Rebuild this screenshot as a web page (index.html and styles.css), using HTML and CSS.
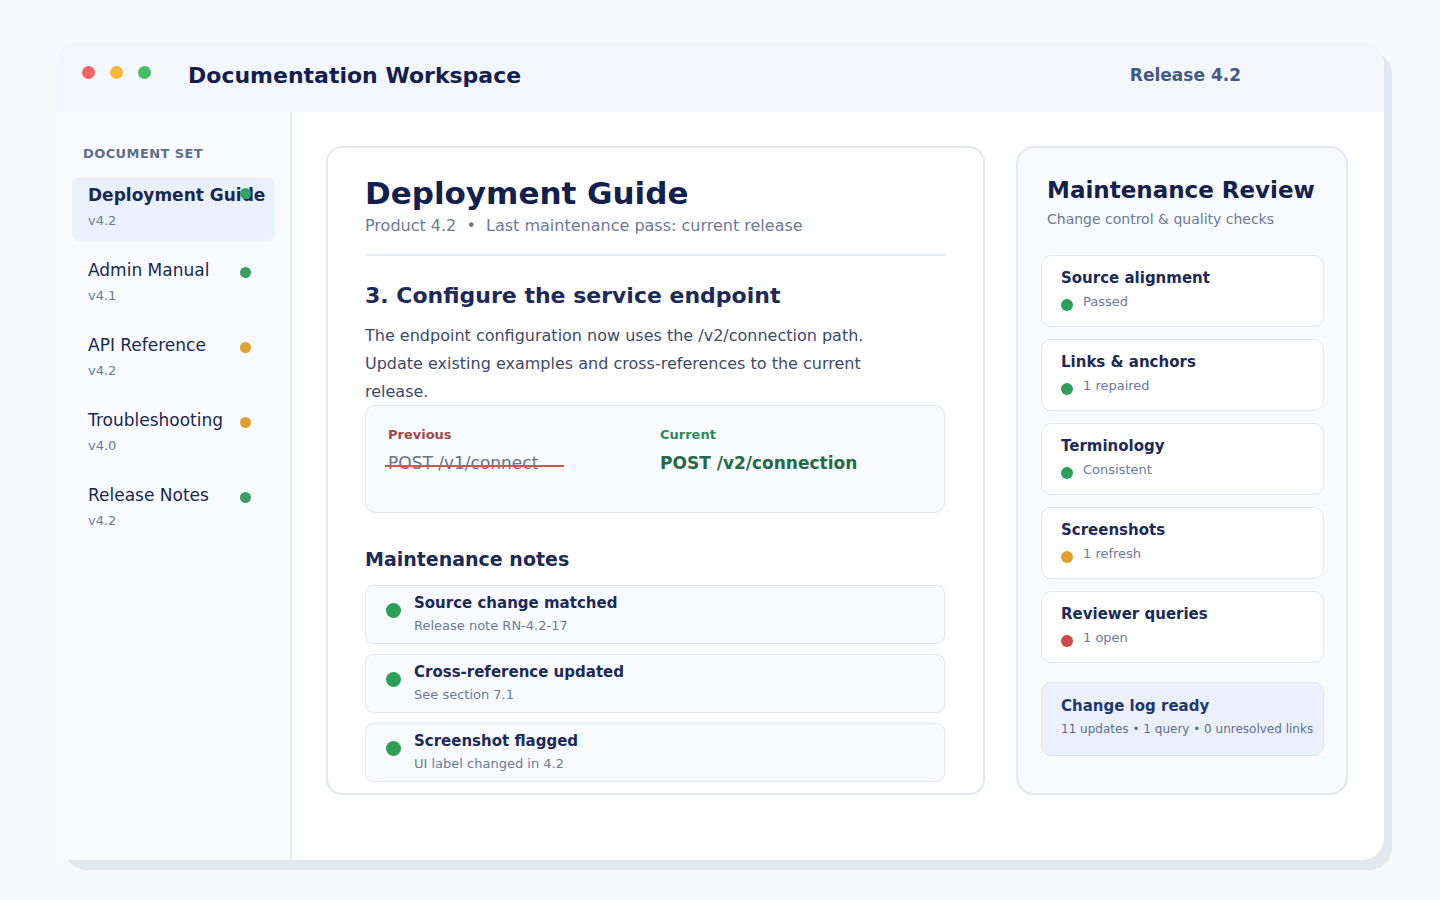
FILE: index.html
```html
<!DOCTYPE html>
<html>
<head>
<meta charset="utf-8">
<link rel="stylesheet" href="styles.css">
</head>
<body>
<div class="window">
  <header class="topbar">
    <div class="lights"><span class="light red"></span><span class="light yellow"></span><span class="light green"></span></div>
    <div class="app-title">Documentation Workspace</div>
    <div class="release">Release 4.2</div>
  </header>
  <div class="body">
    <aside class="sidebar">
      <div class="side-label">DOCUMENT SET</div>
      <div class="doc active"><div class="doc-row"><span class="doc-name">Deployment Guide</span><span class="dot d-green"></span></div><div class="doc-ver">v4.2</div></div>
      <div class="doc"><div class="doc-row"><span class="doc-name">Admin Manual</span><span class="dot d-green"></span></div><div class="doc-ver">v4.1</div></div>
      <div class="doc"><div class="doc-row"><span class="doc-name">API Reference</span><span class="dot d-amber"></span></div><div class="doc-ver">v4.2</div></div>
      <div class="doc"><div class="doc-row"><span class="doc-name">Troubleshooting</span><span class="dot d-amber"></span></div><div class="doc-ver">v4.0</div></div>
      <div class="doc"><div class="doc-row"><span class="doc-name">Release Notes</span><span class="dot d-green"></span></div><div class="doc-ver">v4.2</div></div>
    </aside>
    <main class="content">
      <section class="doc-card">
        <h1 class="doc-title">Deployment Guide</h1>
        <div class="doc-meta">Product 4.2 &nbsp;•&nbsp; Last maintenance pass: current release</div>
        <hr class="divider">
        <h2 class="section-title">3. Configure the service endpoint</h2>
        <p class="para">The endpoint configuration now uses the /v2/connection path. Update existing examples and cross-references to the current release.</p>
        <div class="compare">
          <div class="cmp-col">
            <div class="cmp-label prev">Previous</div>
            <div class="cmp-old">POST /v1/connect<span class="strike"></span></div>
          </div>
          <div class="cmp-col">
            <div class="cmp-label cur">Current</div>
            <div class="cmp-new">POST /v2/connection</div>
          </div>
        </div>
        <h3 class="notes-title">Maintenance notes</h3>
        <div class="note"><span class="note-dot"></span><div><div class="note-title">Source change matched</div><div class="note-sub">Release note RN-4.2-17</div></div></div>
        <div class="note"><span class="note-dot"></span><div><div class="note-title">Cross-reference updated</div><div class="note-sub">See section 7.1</div></div></div>
        <div class="note"><span class="note-dot"></span><div><div class="note-title">Screenshot flagged</div><div class="note-sub">UI label changed in 4.2</div></div></div>
      </section>
      <section class="review">
        <h2 class="review-title">Maintenance Review</h2>
        <div class="review-sub">Change control &amp; quality checks</div>
        <div class="check"><div class="check-title">Source alignment</div><div class="check-status"><span class="sdot s-green"></span>Passed</div></div>
        <div class="check"><div class="check-title">Links &amp; anchors</div><div class="check-status"><span class="sdot s-green"></span>1 repaired</div></div>
        <div class="check"><div class="check-title">Terminology</div><div class="check-status"><span class="sdot s-green"></span>Consistent</div></div>
        <div class="check"><div class="check-title">Screenshots</div><div class="check-status"><span class="sdot s-amber"></span>1 refresh</div></div>
        <div class="check"><div class="check-title">Reviewer queries</div><div class="check-status"><span class="sdot s-red"></span>1 open</div></div>
        <div class="changelog"><div class="cl-title">Change log ready</div><div class="cl-sub">11 updates • 1 query • 0 unresolved links</div></div>
      </section>
    </main>
  </div>
</div>
</body>
</html>
```

FILE: styles.css
```css
* { box-sizing: border-box; }
html, body { margin: 0; padding: 0; }
body {
  background: #f7f9fc;
  font-family: "DejaVu Sans", "Liberation Sans", sans-serif;
  width: 1440px;
  height: 900px;
  overflow: hidden;
}
.window {
  position: relative;
  margin: 42px 0 0 56px;
  width: 1328px;
  height: 818px;
  background: #ffffff;
  border-radius: 22px 22px 22px 0;
  display: flex;
  flex-direction: column;
}
.window::before {
  content: "";
  position: absolute;
  left: 8px; top: 10px; right: -8px; bottom: -10px;
  background: #e2e7f0;
  border-radius: 22px;
  z-index: -1;
}
.topbar {
  height: 70px;
  background: #f3f6fb;
  border-radius: 22px 22px 0 0;
  display: flex;
  align-items: center;
  padding-left: 26px;
}
.lights { display: flex; gap: 15px; margin-top: -10px; }
.light { width: 13px; height: 13px; border-radius: 50%; display: block; }
.red { background: #f26464; }
.yellow { background: #f5b83d; }
.green { background: #45bd64; }
.app-title {
  margin-left: 37px;
  font-size: 22px;
  font-weight: bold;
  color: #13204d;
  margin-top: -4px;
}
.release {
  margin-left: auto;
  margin-right: 143px;
  font-size: 17px;
  font-weight: bold;
  color: #445a85;
  margin-top: -4px;
}
.body { flex: 1; display: flex; min-height: 0; }
.sidebar {
  width: 236px;
  background: #f8fafd;
  border-right: 2px solid #e2e7f0;
  padding: 34px 15px 0 16px;
}
.side-label {
  font-size: 13px;
  font-weight: bold;
  color: #5f6e8c;
  letter-spacing: 0.4px;
  padding-left: 11px;
  margin-bottom: 16px;
}
.doc {
  height: 64px;
  padding: 7px 0 0 16px;
  margin-bottom: 11px;
  border-radius: 8px;
}
.doc.active { background: #eaf1fd; }
.doc-row { display: flex; align-items: center; height: 22px; position: relative; }
.doc-name { font-size: 17px; color: #1a2852; }
.active .doc-name { font-weight: bold; font-size: 17px; }
.dot {
  position: absolute;
  left: 152px;
  top: 8px;
  width: 11px; height: 11px; border-radius: 50%;
}
.active .dot { top: 4px; }
.d-green { background: #3a9e6a; }
.d-amber { background: #e0a030; }
.doc-ver { font-size: 13px; color: #6b7a96; margin-top: 7px; }
.content {
  flex: 1;
  display: flex;
  align-items: flex-start;
  padding: 34px 36px 0 34px;
  gap: 31px;
}
.doc-card {
  width: 659px;
  height: 649px;
  border: 2px solid #e2e7f0;
  border-radius: 16px;
  padding: 26px 38px 0 37px;
  background: #fff;
}
.doc-title {
  margin: 0;
  font-size: 31px;
  line-height: 38px;
  font-weight: bold;
  color: #13204d;
}
.doc-meta {
  font-size: 16px;
  color: #6b7a96;
  margin-top: 4px;
}
.divider {
  border: 0;
  height: 2px;
  background: #e5e9f0;
  margin: 19px 0 0 0;
}
.section-title {
  margin: 26px 0 0 0;
  font-size: 22px;
  line-height: 28px;
  font-weight: bold;
  color: #1c2a55;
}
.para {
  margin: 12px 0 0 0;
  width: 505px;
  font-size: 16px;
  line-height: 28px;
  color: #3e4a66;
}
.compare {
  margin-top: -1px;
  height: 108px;
  background: #f8fafd;
  border: 1px solid #e2e7f0;
  border-radius: 10px;
  display: flex;
  padding: 21px 0 0 22px;
}
.cmp-col { width: 272px; }
.cmp-label { font-size: 13px; font-weight: bold; }
.prev { color: #a34848; }
.cur { color: #2e8a5a; }
.cmp-old {
  position: relative;
  display: inline-block;
  margin-top: 11px;
  font-size: 17px;
  color: #6b7280;
}
.strike {
  position: absolute;
  left: -3px;
  width: 179px;
  top: 12px;
  height: 2px;
  background: #d05555;
}
.cmp-new {
  margin-top: 11px;
  font-size: 17px;
  font-weight: bold;
  color: #236b45;
}
.notes-title {
  margin: 34px 0 14px 0;
  font-size: 19px;
  line-height: 24px;
  font-weight: bold;
  color: #1c2a55;
}
.note {
  height: 59px;
  margin-bottom: 10px;
  background: #f8fafd;
  border: 1px solid #e2e7f0;
  border-radius: 8px;
  display: flex;
  align-items: flex-start;
  padding: 7px 0 0 20px;
}
.note-dot {
  width: 15px; height: 15px; border-radius: 50%;
  background: #2f9e5a;
  margin-top: 10px;
  margin-right: 13px;
  flex: none;
}
.note-title { font-size: 15px; font-weight: bold; color: #1c2a55; line-height: 20px; }
.note-sub { font-size: 13px; color: #6b7a96; margin-top: 5px; }
.review {
  width: 332px;
  height: 649px;
  background: #f8fafd;
  border: 2px solid #e2e7f0;
  border-radius: 18px;
  padding: 28px 22px 0 23px;
}
.review-title {
  margin: 0 0 0 6px;
  font-size: 23px;
  line-height: 28px;
  font-weight: bold;
  color: #13204d;
}
.review-sub {
  margin: 7px 0 0 6px;
  font-size: 14px;
  color: #6b7a96;
}
.check {
  height: 72px;
  background: #fff;
  border: 1px solid #e2e7f0;
  border-radius: 10px;
  padding: 12px 0 0 19px;
  margin-top: 12px;
}
.review-sub + .check { margin-top: 28px; }
.check-title { font-size: 15px; font-weight: bold; color: #1c2a55; line-height: 20px; }
.check-status {
  display: flex;
  align-items: center;
  font-size: 13px;
  color: #6b7a96;
  margin-top: 4px;
}
.sdot { width: 12px; height: 12px; border-radius: 50%; margin-right: 10px; margin-top: 7px; flex: none; }
.s-green { background: #2f9e5a; }
.s-amber { background: #e0a030; }
.s-red { background: #c94b4b; }
.changelog {
  margin-top: 19px;
  height: 74px;
  background: #eaf1fd;
  border: 1px solid #dde5f2;
  border-radius: 10px;
  padding: 13px 0 0 19px;
}
.cl-title { font-size: 15px; font-weight: bold; color: #22376e; line-height: 20px; }
.cl-sub { font-size: 12px; color: #5f6e8c; margin-top: 6px; white-space: nowrap; }
```
